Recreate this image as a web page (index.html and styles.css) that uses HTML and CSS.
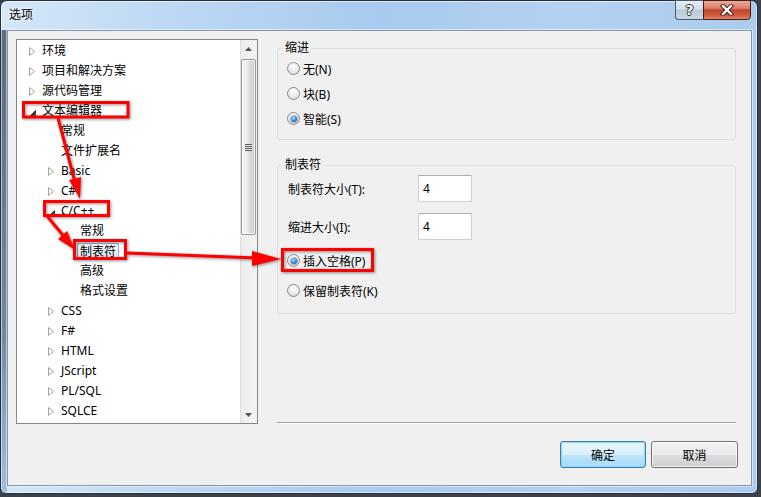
FILE: index.html
```html
<!DOCTYPE html>
<html lang="zh-CN">
<head>
<meta charset="utf-8">
<title>选项</title>
<link rel="stylesheet" href="styles.css">
</head>
<body>
<div class="window">
  <div class="titlebar">
    <span class="title">选项</span>
    <div class="caption">
      <div class="cbtn help">?</div>
      <div class="cbtn close">
        <svg width="14" height="12" viewBox="0 0 14 12"><path d="M3 2 L11 10 M11 2 L3 10" stroke="#3a1410" stroke-width="4.2" stroke-linecap="square"/><path d="M3 2 L11 10 M11 2 L3 10" stroke="#fff" stroke-width="2.4" stroke-linecap="square"/></svg>
      </div>
    </div>
  </div>
  <div class="client">
    <div class="main">
      <div class="tree">
        <ul class="tree-list">
          <li class="row l0"><span class="tw"><svg class="tri-c" width="6" height="9" viewBox="0 0 6 9"><polygon points="0.5,0.5 5.5,4.5 0.5,8.5"/></svg></span><span>环境</span></li>
          <li class="row l0"><span class="tw"><svg class="tri-c" width="6" height="9" viewBox="0 0 6 9"><polygon points="0.5,0.5 5.5,4.5 0.5,8.5"/></svg></span><span>项目和解决方案</span></li>
          <li class="row l0"><span class="tw"><svg class="tri-c" width="6" height="9" viewBox="0 0 6 9"><polygon points="0.5,0.5 5.5,4.5 0.5,8.5"/></svg></span><span>源代码管理</span></li>
          <li class="row l0"><span class="tw"><svg class="tri-o" width="6" height="6" viewBox="0 0 6 6"><polygon points="5.5,0.5 5.5,5.5 0.5,5.5"/></svg></span><span>文本编辑器</span></li>
          <li class="row l1"><span class="tw"></span><span>常规</span></li>
          <li class="row l1"><span class="tw"></span><span>文件扩展名</span></li>
          <li class="row l1"><span class="tw"><svg class="tri-c" width="6" height="9" viewBox="0 0 6 9"><polygon points="0.5,0.5 5.5,4.5 0.5,8.5"/></svg></span><span>Basic</span></li>
          <li class="row l1"><span class="tw"><svg class="tri-c" width="6" height="9" viewBox="0 0 6 9"><polygon points="0.5,0.5 5.5,4.5 0.5,8.5"/></svg></span><span>C#</span></li>
          <li class="row l1"><span class="tw"><svg class="tri-o" width="6" height="6" viewBox="0 0 6 6"><polygon points="5.5,0.5 5.5,5.5 0.5,5.5"/></svg></span><span>C/C++</span></li>
          <li class="row l2"><span class="tw"></span><span>常规</span></li>
          <li class="row l2"><span class="tw"></span><span class="sel">制表符</span></li>
          <li class="row l2"><span class="tw"></span><span>高级</span></li>
          <li class="row l2"><span class="tw"></span><span>格式设置</span></li>
          <li class="row l1"><span class="tw"><svg class="tri-c" width="6" height="9" viewBox="0 0 6 9"><polygon points="0.5,0.5 5.5,4.5 0.5,8.5"/></svg></span><span>CSS</span></li>
          <li class="row l1"><span class="tw"><svg class="tri-c" width="6" height="9" viewBox="0 0 6 9"><polygon points="0.5,0.5 5.5,4.5 0.5,8.5"/></svg></span><span>F#</span></li>
          <li class="row l1"><span class="tw"><svg class="tri-c" width="6" height="9" viewBox="0 0 6 9"><polygon points="0.5,0.5 5.5,4.5 0.5,8.5"/></svg></span><span>HTML</span></li>
          <li class="row l1"><span class="tw"><svg class="tri-c" width="6" height="9" viewBox="0 0 6 9"><polygon points="0.5,0.5 5.5,4.5 0.5,8.5"/></svg></span><span>JScript</span></li>
          <li class="row l1"><span class="tw"><svg class="tri-c" width="6" height="9" viewBox="0 0 6 9"><polygon points="0.5,0.5 5.5,4.5 0.5,8.5"/></svg></span><span>PL/SQL</span></li>
          <li class="row l1"><span class="tw"><svg class="tri-c" width="6" height="9" viewBox="0 0 6 9"><polygon points="0.5,0.5 5.5,4.5 0.5,8.5"/></svg></span><span>SQLCE</span></li>
        </ul>
        <div class="vscroll">
          <div class="sbtn"><svg width="7" height="4" viewBox="0 0 7 4"><polygon points="0,4 3.5,0 7,4" fill="#555"/></svg></div>
          <div class="thumb"><span class="grip"></span></div>
          <div class="track"></div>
          <div class="sbtn"><svg width="7" height="4" viewBox="0 0 7 4"><polygon points="0,0 7,0 3.5,4" fill="#555"/></svg></div>
        </div>
      </div>
      <div class="panel">
        <fieldset class="group g1">
          <legend>缩进</legend>
          <div class="radio"><span class="rb"></span>无(N)</div>
          <div class="radio"><span class="rb"></span>块(B)</div>
          <div class="radio"><span class="rb on"></span>智能(S)</div>
        </fieldset>
        <fieldset class="group g2">
          <legend>制表符</legend>
          <div class="field f1"><span class="flabel">制表符大小(T):</span><span class="input">4</span></div>
          <div class="field f2"><span class="flabel">缩进大小(I):</span><span class="input">4</span></div>
          <div class="radio r1"><span class="rb on"></span>插入空格(P)</div>
          <div class="radio r2"><span class="rb"></span>保留制表符(K)</div>
        </fieldset>
        <div class="sep"></div>
      </div>
    </div>
    <div class="buttons">
      <button class="btn default">确定</button>
      <button class="btn cancel">取消</button>
    </div>
  </div>
</div>
<svg class="annot" width="761" height="497" viewBox="0 0 761 497">
  <g fill="none" stroke="#f00" stroke-width="3">
    <rect x="23.5" y="102.5" width="104.5" height="14.5"/>
    <rect x="44.5" y="201.5" width="64" height="14"/>
    <rect x="74.5" y="240.5" width="51" height="18"/>
    <rect x="282.5" y="249.5" width="90" height="21"/>
    <path d="M58 118 L76 186"/>
    <path d="M47 216 L66 239"/>
    <path d="M127 253 L258 258"/>
  </g>
  <g fill="#f00">
    <polygon points="80,199 69,180 81,177"/>
    <polygon points="75,250 58,239 67,231"/>
    <polygon points="281,259 252,251 252,266"/>
  </g>
</svg>
</body>
</html>
```
FILE: styles.css
```css
* { box-sizing: border-box; }
html, body { margin: 0; padding: 0; }
body {
  width: 761px;
  height: 497px;
  overflow: hidden;
  position: relative;
  background: #3b424b;
  font-family: "Noto Sans", "Noto Sans CJK SC", sans-serif;
  font-size: 12px;
  color: #000;
}

.window {
  width: 758px;
  height: 494px;
  border: 1px solid #26303b;
  border-radius: 7px 7px 6px 6px;
  display: flex;
  flex-direction: column;
  background:
    linear-gradient(180deg, #5d6c7e 0, #6f86a2 60%, #a9c7e9 100%) 0 29px / 6px 100% no-repeat,
    linear-gradient(90deg, #d5e7f8 0%, #bcd8f3 22%, #a9caee 50%, #b3d1f1 75%, #abcbee 100%);
  box-shadow: inset 0 0 0 1px rgba(255, 255, 255, 0.55);
}

.titlebar {
  height: 29px;
  flex: none;
  display: flex;
  align-items: flex-start;
  padding: 0 6px 0 8px;
}
.title {
  margin-top: 5px;
  line-height: 18px;
  text-shadow: 0 0 6px #fff, 0 0 3px #fff;
}
.caption {
  margin-left: auto;
  margin-top: -1px;
  display: flex;
}
.cbtn {
  height: 20px;
  display: flex;
  align-items: center;
  justify-content: center;
}
.help {
  width: 28px;
  border: 1px solid #4c5a6b;
  border-right: none;
  border-radius: 0 0 0 4px;
  background: linear-gradient(180deg, #e6eef7 0, #d2dfec 45%, #b7c9dc 50%, #c9d9e8 100%);
  color: #fff;
  font-weight: bold;
  font-size: 14px;
  font-family: "DejaVu Sans", sans-serif;
  text-shadow: 1px 0 0 #333, -1px 0 0 #333, 0 1px 0 #333, 0 -1px 0 #333;
}
.close {
  width: 48px;
  border: 1px solid #4a1b15;
  border-radius: 0 0 4px 0;
  background: linear-gradient(180deg, #eaa898 0, #d9806b 40%, #c2432c 50%, #cf5b3f 80%, #e08a62 100%);
}

.client {
  flex: none;
  height: 456px;
  margin: 0 5px 0 6px;
  border: 1px solid #8696a8;
  box-shadow: 0 0 0 1px rgba(255, 255, 255, 0.5);
  background: #f0f0f0;
  padding: 8px 13px 0 8px;
  display: flex;
  flex-direction: column;
}

.main {
  display: flex;
  height: 385px;
  flex: none;
}

.tree {
  width: 242px;
  height: 385px;
  border: 1px solid #828790;
  background: #fff;
  display: flex;
}
.tree-list {
  list-style: none;
  margin: 0;
  padding: 1px 0 0 0;
  flex: 1;
}
.row {
  height: 20px;
  line-height: 20px;
  display: flex;
  align-items: center;
  white-space: nowrap;
}
.l0 { padding-left: 12px; }
.l1 { padding-left: 31px; }
.l2 { padding-left: 50px; }
.tw {
  width: 13px;
  height: 20px;
  flex: none;
  display: flex;
  align-items: center;
}
.tri-c polygon { fill: #fff; stroke: #a3a3a3; stroke-width: 1; }
.tri-o { margin-top: 3px; margin-left: 1px; }
.tri-o polygon { fill: #3f3f3f; stroke: #3f3f3f; stroke-width: 1; }
.sel {
  margin-left: -3px;
  padding: 0 2px;
  line-height: 15px;
  border: 1px solid #8fb0d8;
  border-radius: 2px;
  background: linear-gradient(180deg, #f5f9fd 0, #dde8f6 100%);
}

.vscroll {
  width: 17px;
  flex: none;
  display: flex;
  flex-direction: column;
  background: linear-gradient(90deg, #dcdcdc 0, #eeeeee 2px, #f3f3f3 100%);
}
.sbtn {
  height: 17px;
  flex: none;
  display: flex;
  align-items: center;
  justify-content: center;
}
.thumb {
  height: 176px;
  margin: 2px 1px 0 1px;
  flex: none;
  border: 1px solid #9a9a9a;
  border-radius: 2px;
  background: linear-gradient(90deg, #f4f4f4 0, #ebebeb 45%, #d9d9d9 55%, #cfcfcf 100%);
  box-shadow: inset 0 0 0 1px rgba(255, 255, 255, 0.7);
  display: flex;
  align-items: center;
  justify-content: center;
}
.grip {
  width: 7px;
  height: 7px;
  background: repeating-linear-gradient(180deg, #5a5a5a 0, #5a5a5a 1px, #e8e8e8 1px, #e8e8e8 2px);
}
.track { flex: 1; }

.panel {
  margin-left: 19px;
  width: 459px;
  height: 385px;
  display: flex;
  flex-direction: column;
}
.group {
  margin: 0;
  min-width: 0;
  padding: 0 9px 8px 9px;
  border: 1px solid #d5dfe5;
  border-radius: 3px;
}
.group legend {
  padding: 0 2px;
  margin-left: -4px;
  line-height: 16px;
  height: 16px;
}
.g1 { margin-top: 1px; }
.g2 { margin-top: 17px; padding-bottom: 10px; }

.radio {
  height: 25px;
  display: flex;
  align-items: center;
  white-space: nowrap;
}
.rb {
  width: 13px;
  height: 13px;
  flex: none;
  margin-right: 3px;
  border-radius: 50%;
  border: 1px solid #8b8b8b;
  background: radial-gradient(circle at 50% 30%, #ffffff 0, #f1f1f1 40%, #d3d3d3 100%);
  display: flex;
  align-items: center;
  justify-content: center;
}
.rb.on::after {
  content: "";
  width: 6px;
  height: 6px;
  border-radius: 50%;
  background: radial-gradient(circle at 40% 35%, #b5e6ff 0, #3d8fdc 45%, #114a8c 100%);
  box-shadow: 0 0 0 1px rgba(30, 70, 120, 0.35);
}
.r1 { margin-top: 8px; }
.r2 { margin-top: 5px; }

.field {
  height: 27px;
  display: flex;
  align-items: center;
}
.f1 { margin-top: 2px; }
.f2 { margin-top: 11px; }
.flabel {
  width: 131px;
  flex: none;
  padding-left: 1px;
}
.input {
  width: 54px;
  height: 27px;
  border: 1px solid #cdd1d6;
  border-top-color: #abadb3;
  background: #fff;
  padding-left: 4px;
  line-height: 25px;
}

.sep {
  margin-top: auto;
  height: 2px;
  border-top: 1px solid #a0a0a0;
  border-bottom: 1px solid #ffffff;
}

.buttons {
  margin-top: 17px;
  display: flex;
  justify-content: flex-end;
  gap: 5px;
}
.btn {
  font: inherit;
  height: 27px;
  padding: 0;
  color: #000;
  border-radius: 3px;
}
.default {
  width: 86px;
  border: 1px solid #3c7fb1;
  background: linear-gradient(180deg, #eaf6fd 0, #d9f0fc 50%, #bee6fd 50%, #a7d9f5 100%);
  box-shadow: inset 0 0 0 1px #8fd5f7;
}
.cancel {
  width: 87px;
  border: 1px solid #707070;
  background: linear-gradient(180deg, #f2f2f2 0, #ebebeb 50%, #dddddd 50%, #cfcfcf 100%);
  box-shadow: inset 0 0 0 1px rgba(255, 255, 255, 0.75);
}

.annot {
  position: absolute;
  left: 0;
  top: 0;
  pointer-events: none;
  filter: drop-shadow(1px 1px 1.5px rgba(0, 0, 0, 0.45));
}
```
